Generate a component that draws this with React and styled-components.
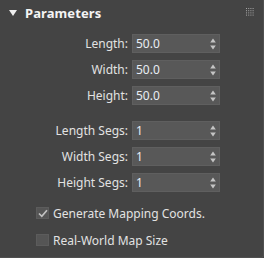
import React from "react";
import styled, { createGlobalStyle } from "styled-components";

const Global = createGlobalStyle`
  html, body { margin: 0; padding: 0; background: #444444; }
  * { box-sizing: border-box; }
`;

const Panel = styled.div`
  width: 264px;
  height: 258px;
  background: #444444;
  border-right: 1px solid #505050;
  border-bottom: 1px solid #505050;
  border-radius: 0 0 3px 0;
  font-family: "Noto Sans", "Open Sans", sans-serif;
  font-size: 12px;
  color: #e2e2e2;
  position: relative;
`;

const Header = styled.div`
  height: 26px;
  display: flex;
  align-items: center;
  padding-left: 9px;
  gap: 8px;
`;

const Title = styled.span`
  font-weight: 700;
  font-size: 13px;
  color: #f4f4f4;
  letter-spacing: 0.1px;
`;

const Grip = styled.svg`
  position: absolute;
  top: 8px;
  right: 9px;
`;

const Group = styled.div`
  display: flex;
  flex-direction: column;
  gap: 7px;
  margin-top: ${(p) => p.$top}px;
`;

const Row = styled.div`
  display: grid;
  grid-template-columns: 1fr 88px;
  column-gap: 4px;
  padding-right: 43px;
  height: 19px;
  align-items: center;
`;

const Label = styled.span`
  text-align: right;
  white-space: nowrap;
`;

const Spinner = styled.div`
  height: 19px;
  background: #585858;
  border: 1px solid #5f5f5f;
  display: flex;
  align-items: center;
  justify-content: space-between;
  padding: 0 3px 0 3px;
  color: #e8eef4;
`;

const CheckRow = styled.label`
  display: flex;
  align-items: center;
  gap: 4px;
  height: 20px;
  padding-left: 36px;
  margin-top: ${(p) => p.$top}px;
`;

const Box = styled.span`
  width: 13px;
  height: 12px;
  background: #555555;
  border: 1px solid #5c5c5c;
  display: flex;
  align-items: center;
  justify-content: center;
`;

const Arrows = () => (
  <svg width="6" height="12" viewBox="0 0 6 12">
    <path d="M3 0.5 L5.8 4.5 L0.2 4.5 Z" fill="#c4c4c4" />
    <path d="M0.2 7.5 L5.8 7.5 L3 11.5 Z" fill="#c4c4c4" />
  </svg>
);

const Field = ({ label, value }) => (
  <Row>
    <Label>{label}</Label>
    <Spinner>
      <span>{value}</span>
      <Arrows />
    </Spinner>
  </Row>
);

const Check = ({ checked, label, top }) => (
  <CheckRow $top={top}>
    <Box>
      {checked && (
        <svg width="10" height="9" viewBox="0 0 10 9">
          <path d="M1 4.5 L3.8 7.3 L9 1.2" stroke="#c2c2c2" strokeWidth="1.7" fill="none" />
        </svg>
      )}
    </Box>
    <span>{label}</span>
  </CheckRow>
);

export default function App() {
  const dots = [];
  for (let r = 0; r < 4; r++)
    for (let c = 0; c < 4; c++)
      dots.push(<rect key={r * 4 + c} x={c * 2.2} y={r * 2.2} width="1" height="1" fill="#a8a8a8" />);
  return (
    <>
      <Global />
      <Panel>
        <Header>
          <svg width="8" height="6" viewBox="0 0 8 6">
            <path d="M0 0 L8 0 L4 6 Z" fill="#eeeeee" />
          </svg>
          <Title>Parameters</Title>
        </Header>
        <Grip width="8" height="8" viewBox="0 0 8 8">{dots}</Grip>
        <Group $top={8}>
          <Field label="Length:" value="50.0" />
          <Field label="Width:" value="50.0" />
          <Field label="Height:" value="50.0" />
        </Group>
        <Group $top={16}>
          <Field label="Length Segs:" value="1" />
          <Field label="Width Segs:" value="1" />
          <Field label="Height Segs:" value="1" />
        </Group>
        <Check checked top={11} label="Generate Mapping Coords." />
        <Check top={7} label="Real-World Map Size" />
      </Panel>
    </>
  );
}
